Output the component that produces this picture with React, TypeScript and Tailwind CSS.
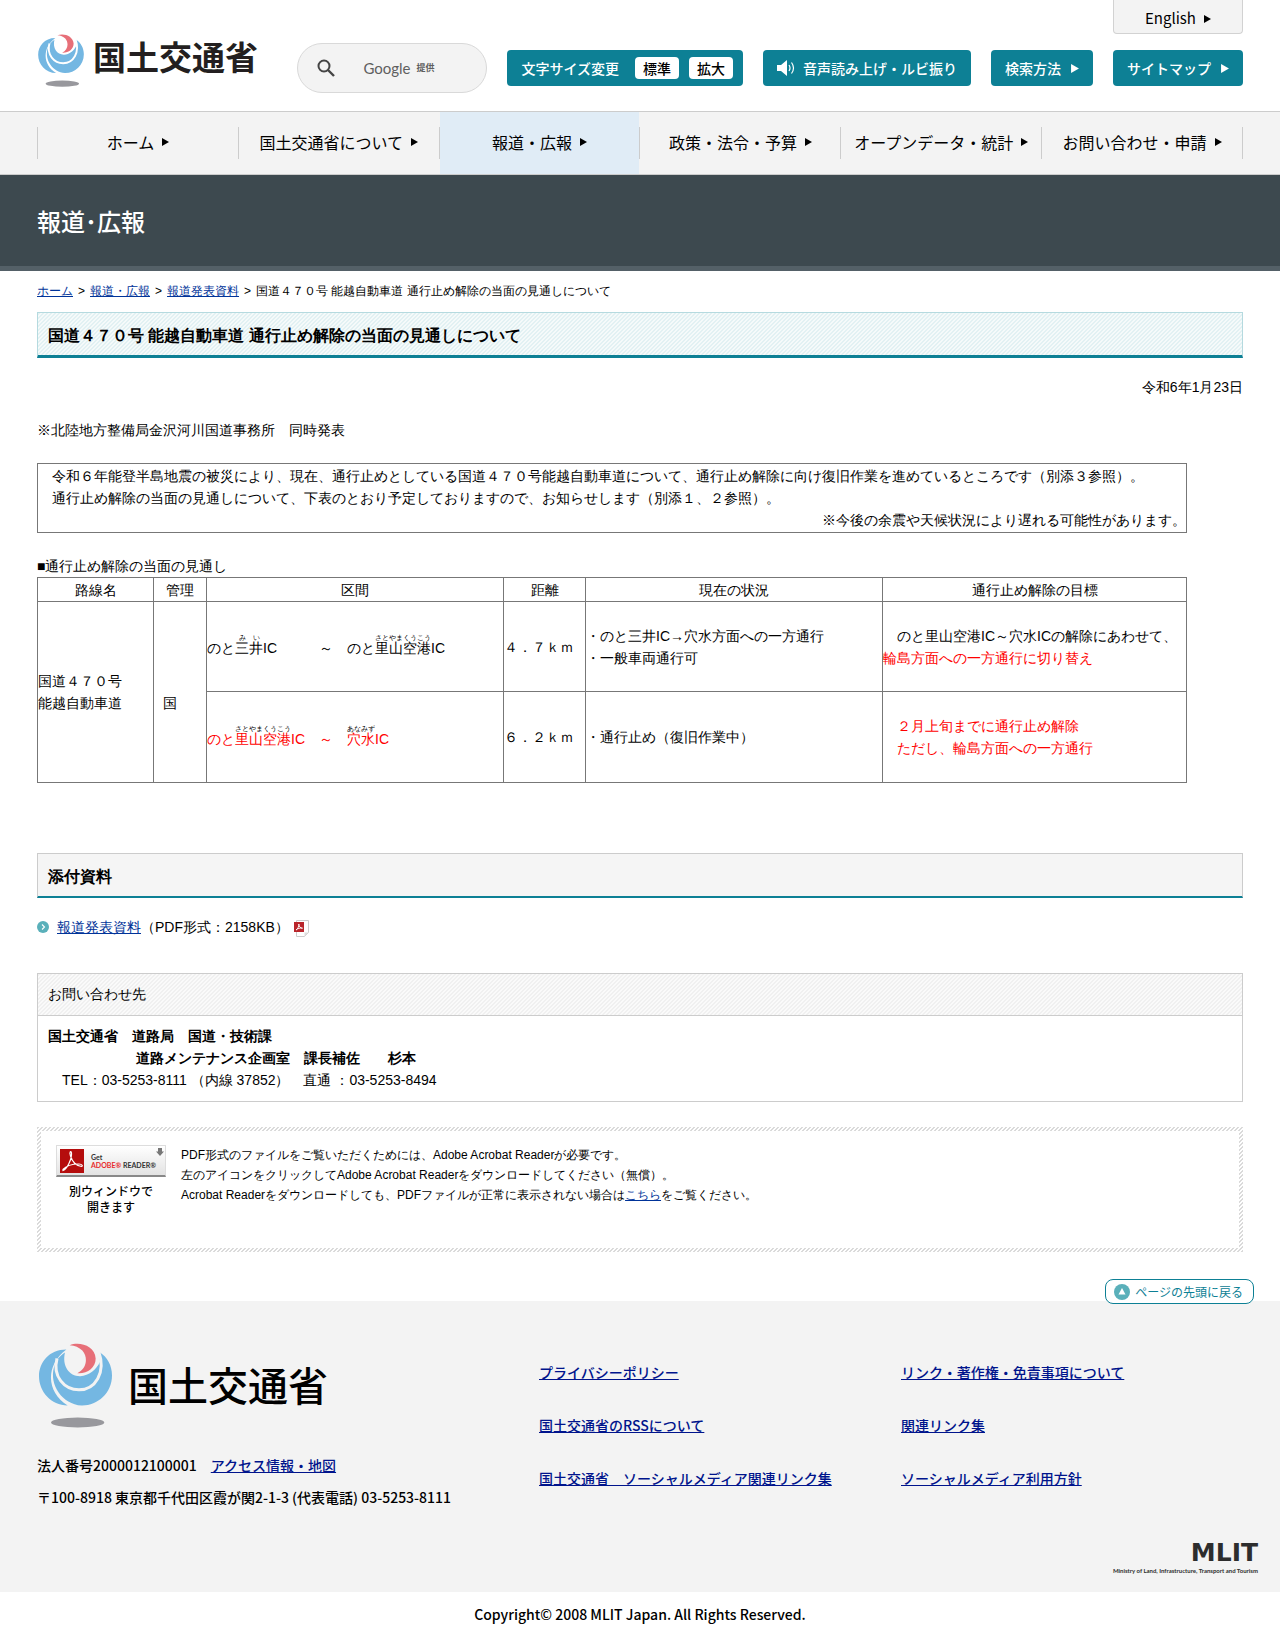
import type { ReactNode } from "react";

const NAV_ITEMS = [
  { label: "ホーム", active: false },
  { label: "国土交通省について", active: false },
  { label: "報道・広報", active: true },
  { label: "政策・法令・予算", active: false },
  { label: "オープンデータ・統計", active: false },
  { label: "お問い合わせ・申請", active: false },
];

const FOOTER_LINKS = [
  "プライバシーポリシー",
  "リンク・著作権・免責事項について",
  "国土交通省のRSSについて",
  "関連リンク集",
  "国土交通省　ソーシャルメディア関連リンク集",
  "ソーシャルメディア利用方針",
];

/** Small right-pointing triangle used after menu labels. */
function Arrow({ className = "h-2 w-[7px]" }: { className?: string }) {
  return (
    <svg viewBox="0 0 7 8" className={`shrink-0 fill-current ${className}`} aria-hidden="true">
      <path d="M0 0L7 4L0 8Z" />
    </svg>
  );
}

/** Ministry emblem. `gap` is the colour behind it, seen between the blue bands. */
function Emblem({ gap, className }: { gap: string; className: string }) {
  return (
    <svg viewBox="0 0 219 254" className={className} aria-hidden="true">
      <path d="M82 19C30 19 0 58 0 99C0 145 36 186 86 187C20 145 20 65 82 19Z" fill="#74b7e2" />
      <path
        d="M180 26C206 42 219 68 219 97C219 150 175 188 128 187C70 183 30 125 45 72C52 50 62 38 78 28C68 70 92 100 124 99C150 98 172 80 183 56Z"
        fill="#74b7e2"
      />
      <path d="M54 46C40 100 76 140 120 140C168 140 202 90 179 24" fill="none" stroke={gap} strokeWidth="9" />
      <path d="M92 6C122 -6 168 8 170 46C170 74 145 92 115 90C142 78 149 44 130 22C120 12 108 7 92 6Z" fill="#e76f78" />
      <ellipse cx="116" cy="238" rx="80" ry="15" fill="#98989d" />
    </svg>
  );
}

function TealLink({ children }: { children: ReactNode }) {
  return (
    <a
      href="#"
      className="flex h-9 items-center whitespace-nowrap rounded bg-[#0d8095] px-3.5 text-sm font-medium text-white"
    >
      {children}
    </a>
  );
}

function Header() {
  return (
    <header className="border-b border-[#ccc] bg-white px-[37px] font-['Noto_Sans_CJK_JP',sans-serif]">
      <div className="flex h-[111px] justify-between">
        <a href="#" className="mt-[34px] flex h-[53px] items-start gap-2">
          <Emblem gap="#fff" className="h-[53px] w-12" />
          <span className="text-[33px] leading-[44px] font-bold whitespace-nowrap text-[#231f20]">国土交通省</span>
        </a>
        <div className="flex flex-col items-end">
          <a
            href="#"
            className="flex h-[34px] w-[130px] items-center justify-center gap-2 rounded-b border border-t-0 border-[#d2d2d2] bg-[#f3f3f3] pt-1 text-[15px]"
          >
            English
            <Arrow />
          </a>
          <div className="mt-[9px] flex items-center gap-5">
            <form className="flex h-[50px] w-[190px] items-center rounded-full border border-[#d9d9d9] bg-[#f3f3f3] pr-4 pl-[19px]">
              <button type="button" aria-label="検索">
                <svg viewBox="0 0 18 18" className="size-[18px]" fill="none" stroke="#444" strokeWidth="2" aria-hidden="true">
                  <circle cx="7" cy="7" r="5.5" />
                  <path d="M11 11L17 17" strokeWidth="2.4" />
                </svg>
              </button>
              <label htmlFor="site-search" className="ml-7 flex items-center gap-1.5 whitespace-nowrap text-[#5f5f5f]">
                <span className="font-['Lato','Noto_Sans_CJK_JP',sans-serif] text-[15px] leading-5">Google</span>
                <span className="text-[9px] font-bold">提供</span>
              </label>
              <input id="site-search" type="text" className="min-w-0 flex-1 bg-transparent outline-none" />
            </form>
            <div className="flex h-9 items-center rounded bg-[#0d8095] pr-2.5 pl-3.5 text-sm font-medium whitespace-nowrap text-white">
              文字サイズ変更
              <button type="button" className="ml-4 h-[22px] w-11 rounded bg-white leading-[22px] text-black">
                標準
              </button>
              <button type="button" className="ml-2.5 h-[22px] w-11 rounded bg-white leading-[22px] text-black">
                拡大
              </button>
            </div>
            <TealLink>
              <svg viewBox="0 0 18 16" className="mr-2 h-4 w-[18px]" aria-hidden="true">
                <path d="M0 5H4L10 0V16L4 11H0Z" fill="#fff" />
                <path d="M12 5Q14 8 12 11M14.5 2.5Q18.5 8 14.5 13.5" fill="none" stroke="#fff" strokeWidth="1.2" />
              </svg>
              音声読み上げ・ルビ振り
            </TealLink>
            <TealLink>
              検索方法
              <Arrow className="ml-2.5 h-[9px] w-2" />
            </TealLink>
            <TealLink>
              サイトマップ
              <Arrow className="ml-2.5 h-[9px] w-2" />
            </TealLink>
          </div>
        </div>
      </div>
    </header>
  );
}

function GlobalNav() {
  return (
    <nav className="border-b border-[#ccc] bg-[#f3f3f3] px-[37px] font-['Noto_Sans_CJK_JP',sans-serif]">
      <ul className="flex h-[62px] items-center">
        <li className="h-8 w-px bg-[#ccc]" />
        {NAV_ITEMS.map((item) => (
          <li key={item.label} className="flex h-full flex-1 items-center">
            <a
              href="#"
              className={`flex h-full flex-1 items-center justify-center gap-2 pb-0.5 whitespace-nowrap ${
                item.active ? "bg-[#e0ecf6]" : ""
              }`}
            >
              {item.label}
              <Arrow />
            </a>
            <span className="h-8 w-px bg-[#ccc]" />
          </li>
        ))}
      </ul>
    </nav>
  );
}

function Breadcrumb() {
  return (
    <nav className="pt-[10px] text-xs leading-5" aria-label="パンくずリスト">
      {["ホーム", "報道・広報", "報道発表資料"].map((label) => (
        <span key={label}>
          <a href="#" className="text-[#003399] underline">
            {label}
          </a>
          <span className="mx-[5px]">&gt;</span>
        </span>
      ))}
      国道４７０号 能越自動車道 通行止め解除の当面の見通しについて
    </nav>
  );
}

function ScheduleTable() {
  return (
    <table className="w-full table-fixed border-collapse text-left leading-[22px] [&_td]:border [&_td]:border-[#777] [&_td]:p-0 [&_th]:border [&_th]:border-[#777] [&_th]:p-0 [&_th]:text-center [&_th]:font-normal">
      <colgroup>
        <col className="w-[116px]" />
        <col className="w-[53px]" />
        <col className="w-[297px]" />
        <col className="w-[82px]" />
        <col className="w-[297px]" />
        <col />
      </colgroup>
      <thead>
        <tr className="h-6">
          <th>路線名</th>
          <th>管理</th>
          <th>区間</th>
          <th>距離</th>
          <th>現在の状況</th>
          <th>通行止め解除の目標</th>
        </tr>
      </thead>
      <tbody>
        <tr className="h-[90px]">
          <td rowSpan={2}>
            国道４７０号
            <br />
            能越自動車道
          </td>
          <td rowSpan={2}>
            <br />
            <span className="pl-[9px]">国</span>
          </td>
          <td>
            のと
            <ruby>
              三井<rt>みい</rt>
            </ruby>
            IC　　　～　のと
            <ruby>
              里山空港<rt>さとやまくうこう</rt>
            </ruby>
            IC
          </td>
          <td className="whitespace-nowrap">４．７ｋｍ</td>
          <td>
            ・のと三井IC→穴水方面への一方通行
            <br />
            ・一般車両通行可
          </td>
          <td className="whitespace-nowrap">
            {"　のと里山空港IC～穴水ICの解除にあわせて、"}
            <br />
            <span className="text-[#f00]">輪島方面への一方通行に切り替え</span>
          </td>
        </tr>
        <tr className="h-[91px] text-[#f00]">
          <td>
            のと
            <ruby>
              里山空港<rt className="text-black">さとやまくうこう</rt>
            </ruby>
            {"IC　～　"}
            <ruby>
              穴水<rt className="text-black">あなみず</rt>
            </ruby>
            IC
          </td>
          <td className="whitespace-nowrap text-black">６．２ｋｍ</td>
          <td className="text-black">・通行止め（復旧作業中）</td>
          <td>
            {"　２月上旬までに通行止め解除"}
            <br />
            {"　ただし、輪島方面への一方通行"}
          </td>
        </tr>
      </tbody>
    </table>
  );
}

function Attachments() {
  return (
    <section className="mt-[70px]">
      <h2 className="border border-b-2 border-[#ccc] border-b-[#0d8095] bg-[#f5f5f5] px-2.5 pt-3 pb-2 text-base leading-[22px] font-bold">
        添付資料
      </h2>
      <p className="mt-[18px] flex items-center leading-[22px]">
        <svg viewBox="0 0 12 12" className="mr-2 size-3" aria-hidden="true">
          <circle cx="6" cy="6" r="6" fill="#5ab0ba" />
          <path d="M5 3.5L7.5 6L5 8.5" fill="none" stroke="#fff" strokeWidth="1.1" />
        </svg>
        <a href="#" className="text-[#003399] underline">
          報道発表資料
        </a>
        （PDF形式：2158KB）
        <svg viewBox="0 0 15 17" className="mt-0.5 ml-[5px] h-[17px] w-[15px]" aria-hidden="true">
          <path d="M2.5 0.5H14.5V12.5L10.5 16.5H2.5Z" fill="#fff" stroke="#ccc" />
          <path d="M10.5 16.5V12.5H14.5Z" fill="#ddd" />
          <rect y="2" width="10" height="10" fill="#b9252b" />
          <path d="M2 10C4 9 5 6 4.8 4C5 7 6.5 8 8.5 8.2C6 7.8 4 8.3 2 10Z" fill="none" stroke="#fff" strokeWidth="0.9" />
        </svg>
      </p>
    </section>
  );
}

function Contact() {
  return (
    <section className="mt-[35px] border border-[#ccc]">
      <h2 className="border-b border-[#ccc] bg-[linear-gradient(135deg,#f0f0f0_25%,#fafafa_25%_50%,#f0f0f0_50%_75%,#fafafa_75%)] bg-[size:4px_4px] px-2.5 py-[9px] leading-[23px]">
        お問い合わせ先
      </h2>
      <div className="px-2.5 pt-[9px] pb-2.5 leading-[22px]">
        <p className="font-bold">国土交通省　道路局　国道・技術課</p>
        <p className="font-bold">{"　　　　　　\u00a0道路メンテナンス企画室　課長補佐　　杉本"}</p>
        <p>{"　TEL：03-5253-8111 （内線 37852）　直通 ：03-5253-8494"}</p>
      </div>
    </section>
  );
}

function ReaderNotice() {
  return (
    <section className="mt-[25px] bg-[linear-gradient(135deg,#dadada_25%,#ffffff_25%_50%,#dadada_50%_75%,#ffffff_75%)] bg-[size:4px_4px] p-1">
      <div className="flex min-h-[117px] items-start gap-[15px] bg-white px-[15px] pt-3.5">
        <a href="#" className="w-[110px] shrink-0 text-center font-['Noto_Sans_CJK_JP',sans-serif]">
          <span className="flex h-8 items-center gap-[7px] border border-b-2 border-[#ddd] border-b-[#888] bg-linear-to-b from-white to-[#e3e3e3] pl-[3px] text-left">
            <svg viewBox="0 0 24 24" className="size-6 shrink-0" aria-hidden="true">
              <rect width="24" height="24" fill="#b50d0d" />
              <path
                d="M3 21.5C7 20 12 10 11.5 4C11 1.5 9 2.5 10.5 7C12 12 16 16.5 21.5 17.5C23 17.5 22.5 15 19 15C12 15 6 17 3 20.5Z"
                fill="none"
                stroke="#fff"
                strokeWidth="1.2"
              />
            </svg>
            <span className="w-[58px] font-['Lato',sans-serif] text-[7px] leading-2 font-bold whitespace-nowrap text-[#333]">
              Get
              <br />
              <span className="text-[#e8292b]">ADOBE®</span> READER®
            </span>
            <svg viewBox="0 0 8 8" className="mt-0.5 size-2 shrink-0 self-start fill-[#777]" aria-hidden="true">
              <path d="M2 0H6V3.5H8L4 8L0 3.5H2Z" />
            </svg>
          </span>
          <span className="mt-1.5 block text-[12px] leading-4 font-medium">
            別ウィンドウで
            <br />
            開きます
          </span>
        </a>
        <p className="text-xs leading-5">
          PDF形式のファイルをご覧いただくためには、Adobe Acrobat Readerが必要です。
          <br />
          左のアイコンをクリックしてAdobe Acrobat Readerをダウンロードしてください（無償）。
          <br />
          Acrobat Readerをダウンロードしても、PDFファイルが正常に表示されない場合は
          <a href="#" className="text-[#003399] underline">
            こちら
          </a>
          をご覧ください。
        </p>
      </div>
    </section>
  );
}

function Footer() {
  return (
    <footer className="relative mt-[49px] font-['Noto_Sans_CJK_JP',sans-serif] text-sm font-medium">
      <a
        href="#"
        className="absolute -top-[22px] right-[26px] flex h-[25px] items-center gap-[5px] rounded-lg border border-[#0d8095] bg-white pr-2.5 pl-2 text-xs font-normal text-[#0d8095]"
      >
        <svg viewBox="0 0 16 16" className="size-4" aria-hidden="true">
          <circle cx="8" cy="8" r="8" fill="#5ab0ba" />
          <path d="M8 4L11.5 10.5H4.5Z" fill="#fff" />
        </svg>
        ページの先頭に戻る
      </a>
      <div className="bg-[#f3f3f3] px-[37px] pt-[42px] pb-[15px]">
        <div className="flex">
          <div className="w-[502px] shrink-0">
            <a href="#" className="flex items-start gap-4 pl-0.5">
              <Emblem gap="#f3f3f3" className="h-[85px] w-[73px]" />
              <span className="text-[40px] leading-[82px]">国土交通省</span>
            </a>
            <p className="mt-[25px] leading-6">
              {"法人番号2000012100001　"}
              <a href="#" className="text-[#00148c] underline">
                アクセス情報・地図
              </a>
            </p>
            <p className="mt-2 leading-6">〒100-8918 東京都千代田区霞が関2-1-3 (代表電話) 03-5253-8111</p>
          </div>
          <ul className="mt-[17px] grid flex-1 grid-cols-[362px_1fr] content-start gap-y-[29px] leading-6">
            {FOOTER_LINKS.map((label) => (
              <li key={label}>
                <a href="#" className="whitespace-nowrap text-[#00148c] underline">
                  {label}
                </a>
              </li>
            ))}
          </ul>
        </div>
        <div className="-mr-[15px] mt-8 flex flex-col items-end text-[#2d2d2d]">
          <span className="font-['DejaVu_Sans',sans-serif] text-[25px] leading-6 font-bold">MLIT</span>
          <span className="font-['Lato',sans-serif] text-[6px] leading-3 font-bold">
            Ministry of Land, Infrastructure, Transport and Tourism
          </span>
        </div>
      </div>
      <p className="pt-[11px] pb-[13px] text-center text-sm leading-[22px]">
        Copyright© 2008 MLIT Japan. All Rights Reserved.
      </p>
    </footer>
  );
}

export default function App() {
  return (
    <div className="bg-white font-['Liberation_Sans',sans-serif] text-sm text-black [text-spacing-trim:space-all]" lang="ja">
      <div className="text-base">
        <Header />
        <GlobalNav />
      </div>
      <div className="border-b-[5px] border-[#546067] bg-[#3d494f] px-[37px] py-7 font-['Noto_Sans_CJK_JP',sans-serif] text-2xl leading-[35px] font-medium text-white">
        報道･広報
      </div>
      <main className="px-[37px]">
        <Breadcrumb />
        <h1 className="mt-[11px] border border-b-[3px] border-[#b5dadf] border-b-[#0d8095] bg-[linear-gradient(135deg,#e2f1f3_25%,#f5fafa_25%_50%,#e2f1f3_50%_75%,#f5fafa_75%)] bg-[size:4px_4px] px-2.5 pt-[11px] pb-[7px] text-base leading-6 font-bold">
          国道４７０号 能越自動車道 通行止め解除の当面の見通しについて
        </h1>
        <p className="mt-[18px] text-right leading-[22px]">令和6年1月23日</p>
        <p className="mt-[21px] leading-[22px]">※北陸地方整備局金沢河川国道事務所　同時発表</p>
        <div className="mr-14">
          <div className="mt-[22px] border border-[#777] py-px leading-[22px]">
            <p>
              {
                "　令和６年能登半島地震の被災により、現在、通行止めとしている国道４７０号能越自動車道について、通行止め解除に向け復旧作業を進めているところです（別添３参照）。"
              }
            </p>
            <p>{"　通行止め解除の当面の見通しについて、下表のとおり予定しておりますので、お知らせします（別添１、２参照）。"}</p>
            <p className="text-right">※今後の余震や天候状況により遅れる可能性があります。</p>
          </div>
          <p className="mt-[22px] leading-[22px]">■通行止め解除の当面の見通し</p>
          <ScheduleTable />
        </div>
        <Attachments />
        <Contact />
        <ReaderNotice />
      </main>
      <Footer />
    </div>
  );
}
